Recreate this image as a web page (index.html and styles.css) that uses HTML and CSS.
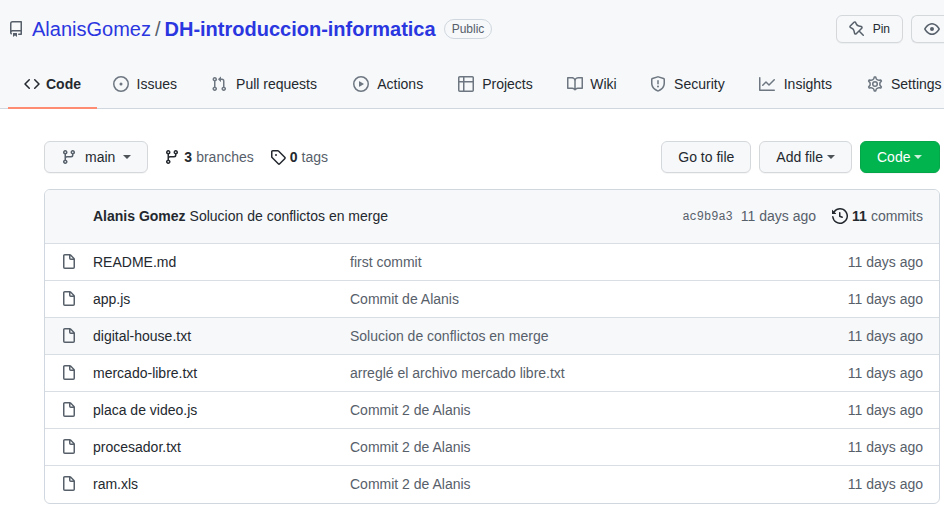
FILE: index.html
```html
<!DOCTYPE html>
<html lang="en">
<head>
<meta charset="utf-8">
<title>AlanisGomez/DH-introduccion-informatica</title>
<link rel="stylesheet" href="styles.css">
</head>
<body>
<svg class="sprite" aria-hidden="true">
  <symbol id="branch" viewBox="0 0 16 16"><path fill-rule="evenodd" d="M11.75 2.5a.75.75 0 100 1.5.75.75 0 000-1.5zm-2.25.75a2.25 2.25 0 113 2.122V6A2.5 2.5 0 0110 8.5H6a1 1 0 00-1 1v1.128a2.251 2.251 0 11-1.5 0V5.372a2.25 2.25 0 111.5 0v1.836A2.492 2.492 0 016 7h4a1 1 0 001-1v-.628A2.25 2.25 0 019.5 3.25zM4.25 12a.75.75 0 100 1.5.75.75 0 000-1.5zM3.5 3.25a.75.75 0 111.5 0 .75.75 0 01-1.5 0z"/></symbol>
  <symbol id="file" viewBox="0 0 16 16"><path fill-rule="evenodd" d="M3.75 1.5a.25.25 0 00-.25.25v11.5c0 .138.112.25.25.25h8.5a.25.25 0 00.25-.25V6H9.75A1.75 1.75 0 018 4.25V1.5H3.75zm5.75.56v2.19c0 .138.112.25.25.25h2.19L9.5 2.06zM2 1.75C2 .784 2.784 0 3.75 0h5.086c.464 0 .909.184 1.237.513l3.414 3.414c.329.328.513.773.513 1.237v8.086A1.75 1.75 0 0112.25 15h-8.5A1.75 1.75 0 012 13.25V1.75z"/></symbol>
</svg>
<header class="repo-header">
  <div class="title-row">
    <svg class="icon" viewBox="0 0 16 16"><path fill-rule="evenodd" d="M2 2.5A2.5 2.5 0 014.5 0h8.75a.75.75 0 01.75.75v12.5a.75.75 0 01-.75.75h-2.5a.75.75 0 110-1.5h1.75v-2h-8a1 1 0 00-.714 1.7.75.75 0 01-1.072 1.05A2.495 2.495 0 012 11.5v-9zm10.5-1V9h-8c-.356 0-.694.074-1 .208V2.5a1 1 0 011-1h8zM5 12.25v3.25a.25.25 0 00.4.2l1.45-1.087a.25.25 0 01.3 0L8.6 15.7a.25.25 0 00.4-.2v-3.25a.25.25 0 00-.25-.25h-3.5a.25.25 0 00-.25.25z"/></svg>
    <h1 class="title"><a href="#">AlanisGomez</a><span class="slash">/</span><a class="repo" href="#">DH-introduccion-informatica</a></h1>
    <span class="label">Public</span>
    <div class="actions">
      <button class="btn small"><svg class="icon" viewBox="0 0 16 16"><path fill-rule="evenodd" d="M4.456.734a1.75 1.75 0 012.826.504l.613 1.327a3.081 3.081 0 002.084 1.707l2.454.584c1.332.317 1.8 1.972.832 2.94L11.06 10l3.72 3.72a.75.75 0 11-1.061 1.06L10 11.06l-2.204 2.205c-.968.968-2.623.5-2.94-.832l-.584-2.454a3.081 3.081 0 00-1.707-2.084l-1.327-.613a1.75 1.75 0 01-.504-2.826L4.456.734zM5.92 1.866a.25.25 0 00-.404-.072L1.794 5.516a.25.25 0 00.072.404l1.328.613A4.582 4.582 0 015.73 9.63l.584 2.454a.25.25 0 00.42.12l5.47-5.47a.25.25 0 00-.12-.42L9.63 5.73a4.581 4.581 0 01-3.098-2.537L5.92 1.866z"/></svg>Pin</button>
      <button class="btn small watch" aria-label="Watch"><svg class="icon" viewBox="0 0 16 16"><path fill-rule="evenodd" d="M1.679 7.932c.412-.621 1.242-1.75 2.366-2.717C5.175 4.242 6.527 3.5 8 3.5c1.473 0 2.824.742 3.955 1.715 1.124.967 1.954 2.096 2.366 2.717a.119.119 0 010 .136c-.412.621-1.242 1.75-2.366 2.717C10.825 11.758 9.473 12.5 8 12.5c-1.473 0-2.824-.742-3.955-1.715C2.92 9.818 2.09 8.69 1.679 8.068a.119.119 0 010-.136zM8 2c-1.981 0-3.67.992-4.933 2.078C1.797 5.169.88 6.423.43 7.1a1.619 1.619 0 000 1.798c.45.678 1.367 1.932 2.637 3.024C4.329 13.008 6.019 14 8 14c1.981 0 3.67-.992 4.933-2.078 1.27-1.091 2.187-2.345 2.637-3.023a1.619 1.619 0 000-1.798c-.45-.678-1.367-1.932-2.637-3.023C11.671 2.992 9.981 2 8 2zm0 8a2 2 0 100-4 2 2 0 000 4z"/></svg></button>
    </div>
  </div>
  <nav class="tabs" aria-label="Repository">
    <a class="tab selected" href="#"><svg class="icon" viewBox="0 0 16 16"><path fill-rule="evenodd" d="M4.72 3.22a.75.75 0 011.06 1.06L2.06 8l3.72 3.72a.75.75 0 11-1.06 1.06L.47 8.53a.75.75 0 010-1.06l4.25-4.25zm6.56 0a.75.75 0 10-1.06 1.06L13.94 8l-3.72 3.72a.75.75 0 101.06 1.06l4.25-4.25a.75.75 0 000-1.06l-4.25-4.25z"/></svg><span data-content="Code">Code</span></a>
    <a class="tab" href="#"><svg class="icon" viewBox="0 0 16 16"><path d="M8 9.5a1.5 1.5 0 100-3 1.5 1.5 0 000 3z"/><path fill-rule="evenodd" d="M8 0a8 8 0 100 16A8 8 0 008 0zM1.5 8a6.5 6.5 0 1113 0 6.5 6.5 0 01-13 0z"/></svg><span data-content="Issues">Issues</span></a>
    <a class="tab" href="#"><svg class="icon" viewBox="0 0 16 16"><path fill-rule="evenodd" d="M7.177 3.073L9.573.677A.25.25 0 0110 .854v4.792a.25.25 0 01-.427.177L7.177 3.427a.25.25 0 010-.354zM3.75 2.5a.75.75 0 100 1.5.75.75 0 000-1.5zm-2.25.75a2.25 2.25 0 113 2.122v5.256a2.251 2.251 0 11-1.5 0V5.372A2.25 2.25 0 011.5 3.25zM11 2.5h-1V4h1a1 1 0 011 1v5.628a2.251 2.251 0 101.5 0V5A2.5 2.5 0 0011 2.5zm1 10.25a.75.75 0 111.5 0 .75.75 0 01-1.5 0zM3.75 12a.75.75 0 100 1.5.75.75 0 000-1.5z"/></svg><span data-content="Pull requests">Pull requests</span></a>
    <a class="tab" href="#"><svg class="icon" viewBox="0 0 16 16"><path fill-rule="evenodd" d="M1.5 8a6.5 6.5 0 1113 0 6.5 6.5 0 01-13 0zM8 0a8 8 0 100 16A8 8 0 008 0zM6.379 5.227A.25.25 0 006 5.442v5.117a.25.25 0 00.379.214l4.264-2.559a.25.25 0 000-.428L6.379 5.227z"/></svg><span data-content="Actions">Actions</span></a>
    <a class="tab" href="#"><svg class="icon" viewBox="0 0 16 16"><path fill-rule="evenodd" d="M0 1.75C0 .784.784 0 1.75 0h12.5C15.216 0 16 .784 16 1.75v12.5A1.75 1.75 0 0114.25 16H1.75A1.75 1.75 0 010 14.25V1.75zM1.5 6.5v7.75c0 .138.112.25.25.25H5v-8H1.5zM5 5H1.5V1.75a.25.25 0 01.25-.25H5V5zm1.5 1.5v8h7.75a.25.25 0 00.25-.25V6.5h-8zm8-1.5h-8V1.5h7.75a.25.25 0 01.25.25V5z"/></svg><span data-content="Projects">Projects</span></a>
    <a class="tab" href="#"><svg class="icon" viewBox="0 0 16 16"><path fill-rule="evenodd" d="M0 1.75A.75.75 0 01.75 1h4.253c1.227 0 2.317.59 3 1.501A3.744 3.744 0 0111.006 1h4.245a.75.75 0 01.75.75v10.5a.75.75 0 01-.75.75h-4.507a2.25 2.25 0 00-1.591.659l-.622.621a.75.75 0 01-1.06 0l-.622-.621A2.25 2.25 0 005.258 13H.75a.75.75 0 01-.75-.75V1.75zm8.755 3a2.25 2.25 0 012.25-2.25H14.5v9h-3.757c-.71 0-1.4.201-1.992.572l.004-7.322zm-1.504 7.324l.004-5.073-.002-2.253A2.25 2.25 0 005.003 2.5H1.5v9h3.757a3.75 3.75 0 011.994.574z"/></svg><span data-content="Wiki">Wiki</span></a>
    <a class="tab" href="#"><svg class="icon" viewBox="0 0 16 16"><path fill-rule="evenodd" d="M7.467.133a1.75 1.75 0 011.066 0l5.25 1.68A1.75 1.75 0 0115 3.48V7c0 1.566-.32 3.182-1.303 4.682-.983 1.498-2.585 2.813-5.032 3.855a1.7 1.7 0 01-1.33 0c-2.447-1.042-4.049-2.357-5.032-3.855C1.32 10.182 1 8.566 1 7V3.48a1.75 1.75 0 011.217-1.667l5.25-1.68zm.61 1.429a.25.25 0 00-.153 0l-5.25 1.68a.25.25 0 00-.174.238V7c0 1.358.275 2.666 1.057 3.86.784 1.194 2.121 2.34 4.366 3.297a.2.2 0 00.154 0c2.245-.956 3.582-2.104 4.366-3.298C13.225 9.666 13.5 8.36 13.5 7V3.48a.25.25 0 00-.174-.237l-5.25-1.68zM9 10.5a1 1 0 11-2 0 1 1 0 012 0zm-.25-5.75a.75.75 0 10-1.5 0v3a.75.75 0 001.5 0v-3z"/></svg><span data-content="Security">Security</span></a>
    <a class="tab" href="#"><svg class="icon" viewBox="0 0 16 16"><path fill-rule="evenodd" d="M1.5 1.75a.75.75 0 00-1.5 0v12.5c0 .414.336.75.75.75h14.5a.75.75 0 000-1.5H1.5V1.75zm14.28 2.53a.75.75 0 00-1.06-1.06L10 7.94 7.53 5.47a.75.75 0 00-1.06 0L3.22 8.72a.75.75 0 001.06 1.06L7 7.06l2.47 2.47a.75.75 0 001.06 0l5.25-5.25z"/></svg><span data-content="Insights">Insights</span></a>
    <a class="tab" href="#"><svg class="icon gear" viewBox="0.6 0.6 14.8 14.8"><path d="M7.429 1.525a6.593 6.593 0 011.142 0c.036.003.108.036.137.146l.289 1.105c.147.56.55.967.997 1.189.174.086.341.183.501.29.417.278.97.423 1.53.27l1.102-.303c.11-.03.175.016.195.046.219.31.41.641.573.989.014.031.022.11-.059.19l-.815.806c-.411.406-.562.957-.53 1.456a4.588 4.588 0 010 .582c-.032.499.119 1.05.53 1.456l.815.806c.08.08.073.159.059.19a6.494 6.494 0 01-.573.99c-.02.029-.086.074-.195.045l-1.103-.303c-.559-.153-1.112-.008-1.529.27-.16.107-.327.204-.5.29-.449.222-.851.628-.998 1.189l-.289 1.105c-.029.11-.101.143-.137.146a6.613 6.613 0 01-1.142 0c-.036-.003-.108-.037-.137-.146l-.289-1.105c-.147-.56-.55-.967-.997-1.189a4.502 4.502 0 01-.501-.29c-.417-.278-.97-.423-1.53-.27l-1.102.303c-.11.03-.175-.016-.195-.046a6.492 6.492 0 01-.573-.989c-.014-.031-.022-.11.059-.19l.815-.806c.411-.406.562-.957.53-1.456a4.587 4.587 0 010-.582c.032-.499-.119-1.05-.53-1.456l-.815-.806c-.08-.08-.073-.159-.059-.19a6.44 6.44 0 01.573-.99c.02-.029.086-.075.195-.045l1.103.303c.559.153 1.112.008 1.529-.27.16-.107.327-.204.5-.29.449-.222.851-.628.998-1.189l.289-1.105c.029-.11.101-.143.137-.146z"/><circle cx="8" cy="8" r="2.1"/></svg><span data-content="Settings">Settings</span></a>
  </nav>
</header>
<main class="content">
  <div class="file-nav">
    <button class="btn branch-btn"><svg class="icon"><use href="#branch"/></svg><span>main</span><i class="caret"></i></button>
    <a class="stat" href="#"><svg class="icon"><use href="#branch"/></svg><strong>3</strong> <span>branches</span></a>
    <a class="stat" href="#"><svg class="icon" viewBox="0 0 16 16"><path fill-rule="evenodd" d="M2.5 7.775V2.75a.25.25 0 01.25-.25h5.025a.25.25 0 01.177.073l6.25 6.25a.25.25 0 010 .354l-5.025 5.025a.25.25 0 01-.354 0l-6.25-6.25a.25.25 0 01-.073-.177zm-1.5 0V2.75C1 1.784 1.784 1 2.75 1h5.025c.464 0 .91.184 1.238.513l6.25 6.25a1.75 1.75 0 010 2.474l-5.026 5.026a1.75 1.75 0 01-2.474 0l-6.25-6.25A1.75 1.75 0 011 7.775zM6 5a1 1 0 100 2 1 1 0 000-2z"/></svg><strong>0</strong> <span>tags</span></a>
    <div class="file-actions">
      <button class="btn">Go to file</button>
      <button class="btn">Add file<i class="caret"></i></button>
      <button class="btn primary">Code<i class="caret"></i></button>
    </div>
  </div>
  <section class="box">
    <div class="commit">
      <a class="author" href="#">Alanis Gomez</a>
      <a class="subject" href="#">Solucion de conflictos en merge</a>
      <a class="sha" href="#">ac9b9a3</a>
      <span class="when">11 days ago</span>
      <a class="stat" href="#"><svg class="icon" viewBox="0 0 16 16"><path fill-rule="evenodd" d="M1.643 3.143L.427 1.927A.25.25 0 000 2.104V5.75c0 .138.112.25.25.25h3.646a.25.25 0 00.177-.427L2.715 4.215a6.5 6.5 0 11-1.18 4.458.75.75 0 10-1.493.154 8.001 8.001 0 101.6-5.684zM7.75 4a.75.75 0 01.75.75v2.992l2.028.812a.75.75 0 01-.557 1.392l-2.5-1A.75.75 0 017 8.25v-3.5A.75.75 0 017.75 4z"/></svg><strong>11</strong> <span>commits</span></a>
    </div>
    <table class="files" aria-label="Files">
      <tbody>
        <tr><td class="kind"><svg class="icon"><use href="#file"/></svg></td><td class="name"><a href="#">README.md</a></td><td><a href="#">first commit</a></td><td class="age">11 days ago</td></tr>
        <tr><td class="kind"><svg class="icon"><use href="#file"/></svg></td><td class="name"><a href="#">app.js</a></td><td><a href="#">Commit de Alanis</a></td><td class="age">11 days ago</td></tr>
        <tr class="active"><td class="kind"><svg class="icon"><use href="#file"/></svg></td><td class="name"><a href="#">digital-house.txt</a></td><td><a href="#">Solucion de conflictos en merge</a></td><td class="age">11 days ago</td></tr>
        <tr><td class="kind"><svg class="icon"><use href="#file"/></svg></td><td class="name"><a href="#">mercado-libre.txt</a></td><td><a href="#">arreglé el archivo mercado libre.txt</a></td><td class="age">11 days ago</td></tr>
        <tr><td class="kind"><svg class="icon"><use href="#file"/></svg></td><td class="name"><a href="#">placa de video.js</a></td><td><a href="#">Commit 2 de Alanis</a></td><td class="age">11 days ago</td></tr>
        <tr><td class="kind"><svg class="icon"><use href="#file"/></svg></td><td class="name"><a href="#">procesador.txt</a></td><td><a href="#">Commit 2 de Alanis</a></td><td class="age">11 days ago</td></tr>
        <tr><td class="kind"><svg class="icon"><use href="#file"/></svg></td><td class="name"><a href="#">ram.xls</a></td><td><a href="#">Commit 2 de Alanis</a></td><td class="age">11 days ago</td></tr>
      </tbody>
    </table>
  </section>
</main>
</body>
</html>
```
FILE: styles.css
```css
* { box-sizing: border-box; }

body {
  margin: 0;
  background: #fff;
  color: #24292f;
  font: 14px/20px "Liberation Sans", Arial, sans-serif;
}

a { color: inherit; text-decoration: none; }
.sprite { display: none; }
.icon { width: 16px; height: 16px; flex: none; display: block; fill: currentColor; }

.repo-header {
  padding-top: 12px;
  background: #f6f8fa;
  border-bottom: 1px solid #d0d7de;
}

.title-row { display: flex; align-items: center; height: 33px; padding-left: 8px; color: #57606a; }
.title { display: flex; margin: 0 8px; font-size: 20px; font-weight: 400; line-height: 30px; white-space: nowrap; }
.title a { color: #2a36e0; }
.title .repo { font-weight: 700; }
.slash { margin: 0 4px; }
.label {
  padding: 0 7px;
  border: 1px solid #d0d7de;
  border-radius: 20px;
  font-size: 12px;
  line-height: 18px;
}
.actions { display: flex; gap: 8px; margin-left: auto; }

.btn {
  display: flex;
  align-items: center;
  height: 32px;
  padding: 0 16px;
  border: 1px solid #d5d8db;
  border-radius: 6px;
  background: #f6f8fa;
  box-shadow: 0 1px 0 rgba(27, 31, 36, 0.04);
  color: #24292f;
  font: inherit;
  white-space: nowrap;
}
.btn .icon { color: #57606a; }
.small { height: 28px; padding: 0 12px; gap: 8px; font-size: 12px; }
.watch { padding-right: 4px; border-right: 0; border-radius: 6px 0 0 6px; }
.primary { min-width: 80px; background: #02b44e; border-color: #05a549; color: #fff; }

.caret {
  margin-left: 4px;
  border: 4px solid transparent;
  border-top-color: currentColor;
  border-bottom: 0;
  opacity: 0.8;
}

.tabs { display: flex; height: 48px; margin: 16px 0 -1px; padding-left: 8px; overflow: hidden; }
.tab {
  display: flex;
  flex: none;
  align-items: center;
  gap: 6px;
  padding: 0 16px;
  border-bottom: 2px solid transparent;
}
.tab span { text-align: center; }
.tab span::before {
  display: block;
  height: 0;
  overflow: hidden;
  visibility: hidden;
  font-weight: 700;
  content: attr(data-content);
}
.tab .icon { color: #6e7781; }
.tab .gear { fill: none; stroke: currentColor; stroke-width: 1.4; stroke-linejoin: round; }
.selected { border-color: #fd8c73; font-weight: 700; }
.selected .icon { color: #24292f; }

.content { padding: 32px 4px 4px 44px; }
.file-nav { display: flex; align-items: center; gap: 16px; margin-bottom: 16px; }
.branch-btn { gap: 8px; }
.branch-btn .caret { margin-left: 0; }
.file-actions { display: flex; gap: 8px; margin-left: auto; }
.stat { display: flex; align-items: center; gap: 4px; white-space: nowrap; }
.stat span { color: #57606a; }

.box { border: 1px solid #d0d7de; border-radius: 6px; overflow: hidden; }
.commit { display: flex; align-items: flex-start; padding: 16px 16px 15px 48px; background: #f6f8fa; }
.author { margin-right: 4px; font-weight: 700; }
.sha { margin: 0 8px 0 auto; color: #57606a; font: 12px/22px "Liberation Mono", monospace; }
.when { margin-right: 16px; color: #57606a; }

.files { width: 100%; border-collapse: collapse; table-layout: fixed; }
.files td { height: 37px; padding: 0 16px 0 0; border-top: 1px solid #d8dee4; color: #57606a; }
.files .kind { width: 48px; padding-left: 16px; }
.files .name { width: 257px; color: #24292f; }
.files .age { width: 140px; text-align: right; }
.active { background: #f6f8fa; }
```
